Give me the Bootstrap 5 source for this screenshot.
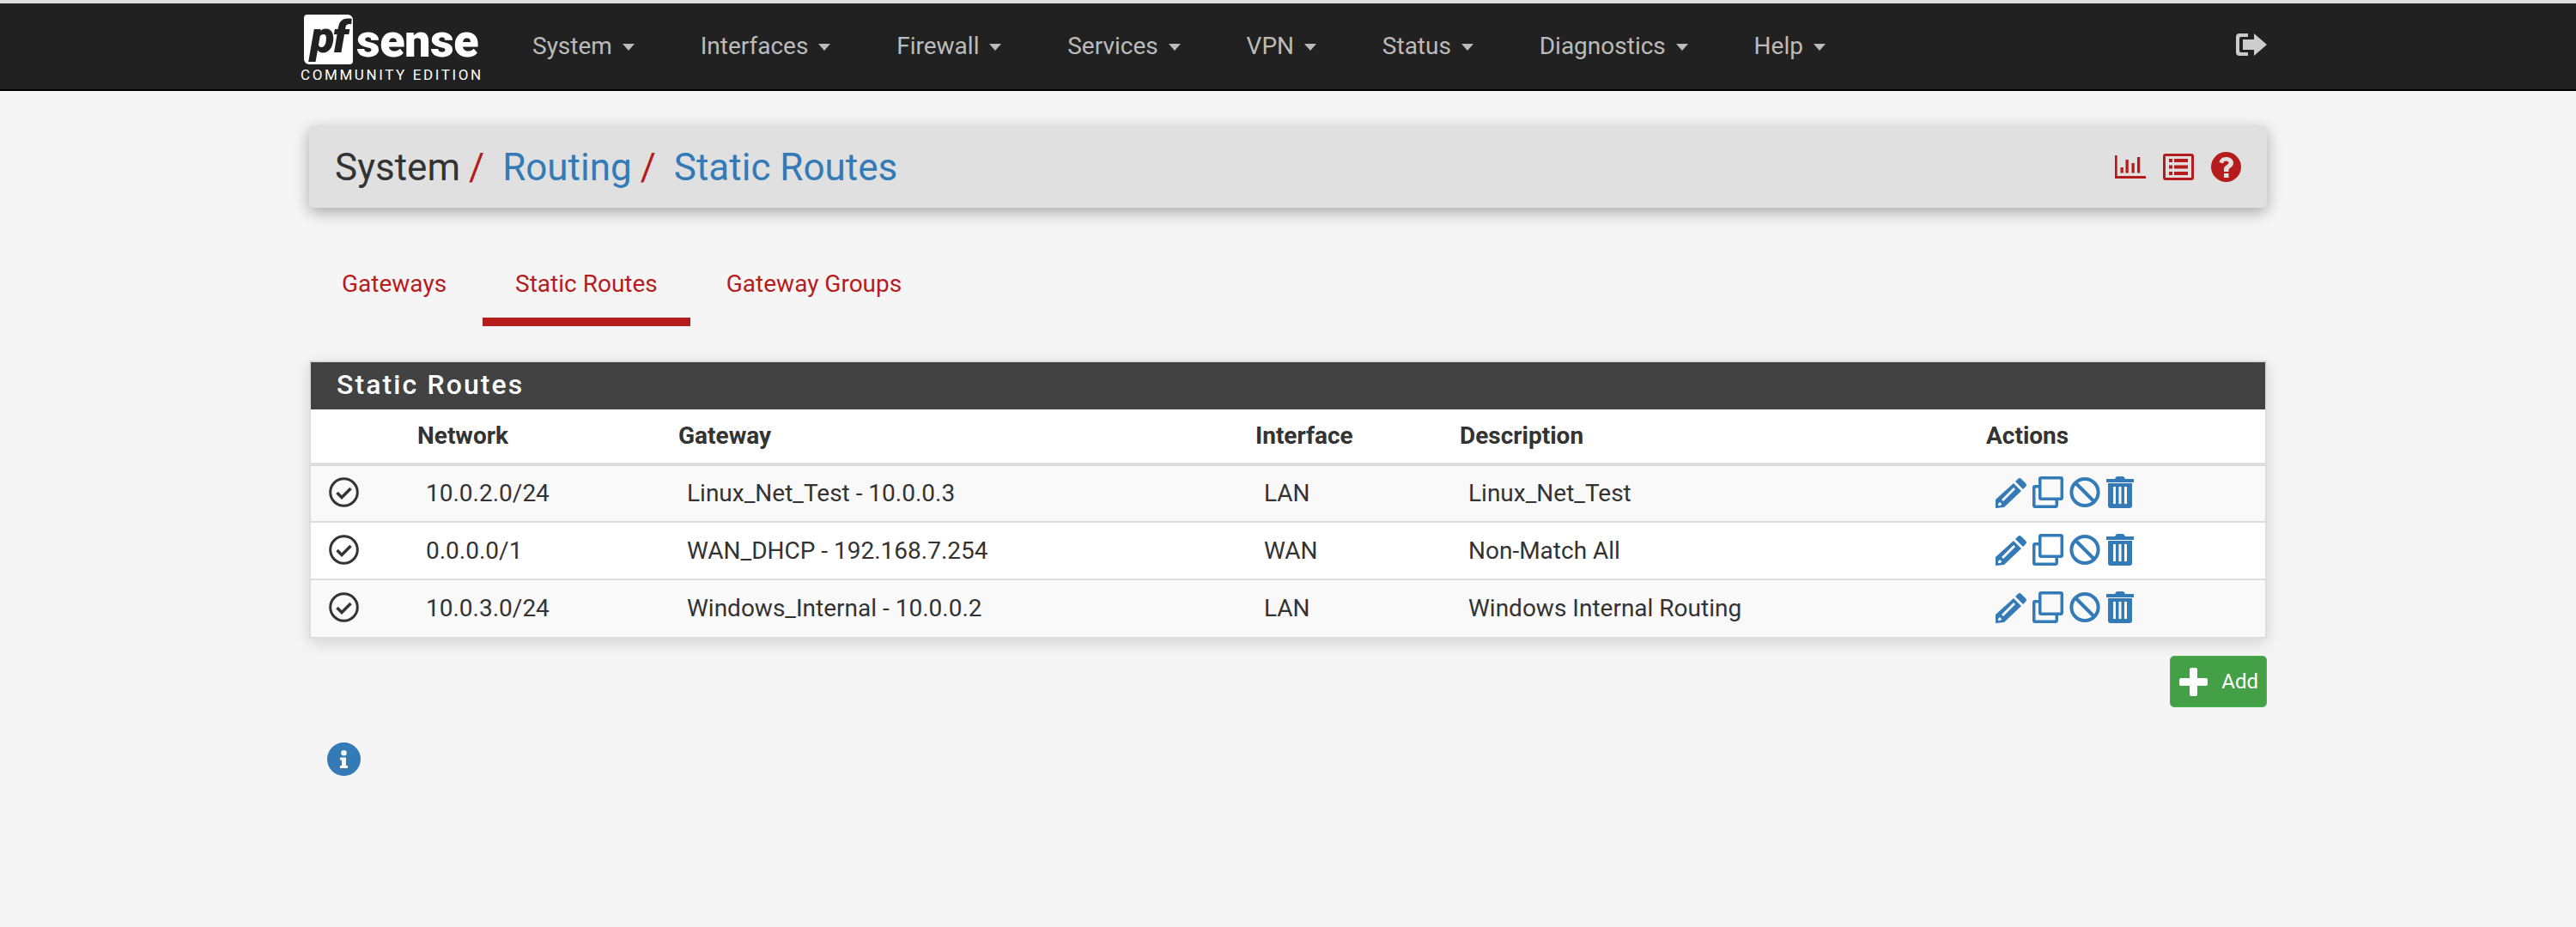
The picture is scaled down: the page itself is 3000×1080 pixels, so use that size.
<!DOCTYPE html>
<html lang="en">
<head>
<meta charset="UTF-8">
<title>pfSense - System: Routing: Static Routes</title>
<link href="https://cdn.jsdelivr.net/npm/bootstrap@5.3.2/dist/css/bootstrap.min.css" rel="stylesheet">
<style>
body { background: #f5f5f5; color: #333; font-family: Roboto, "Liberation Sans", sans-serif; font-size: 28px; border-top: 4px solid #ddd; }
.pf-top { background: #212121; border-bottom: 2px solid #000; height: 102px; padding: 0; }
.pf-topin { width: 2300px; height: 100%; margin: 0 auto; padding: 0 10px 0 0; }
.pf-brand { width: 270px; height: 100%; position: relative; }
.pf-box { position: absolute; left: 4px; top: 13px; width: 57px; height: 58px; background: #fff; border-radius: 4px 6px 4px 6px; color: #212121; font: italic 900 52px/54px Roboto, sans-serif; letter-spacing: -2px; text-align: center; }
.pf-sense { position: absolute; left: 65px; top: 19px; color: #fff; font: 900 54px/50px Roboto, sans-serif; letter-spacing: -.5px; }
.pf-edition { position: absolute; left: 0; top: 73px; color: #fff; font: 400 17px/20px Roboto, sans-serif; letter-spacing: 2.6px; white-space: nowrap; }
.pf-menu .nav-link { color: #bbb; font-size: 28px; line-height: 38px; padding: 0 76.8px 0 0; white-space: nowrap; }
.pf-menu .nav-link::after { border-top: .3em solid; border-right: .27em solid transparent; border-left: .27em solid transparent; border-bottom: 0; margin-left: 12px; vertical-align: .16em; }
.pf-logout { width: 36px; height: 26px; fill: #ccc; margin-bottom: 4px; }
.pf-page { width: 2280px; margin: 0 auto; }
.pf-crumbs { margin-top: 41px; height: 95px; background: #e0e0e0; border-radius: 5px; box-shadow: 0 5px 18px rgba(0,0,0,.32); padding: 0 30px 0 30px; font-size: 44px; }
.pf-crumbs a { color: #337ab7; text-decoration: none; }
.pf-sep { color: #b71c1c; margin: 0 21px 0 10px; }
.pf-tool { fill: #b71c1c; display: block; }
.pf-tabs { margin-top: 38px; }
.pf-tabs .nav-link { color: #b71c1c; font-size: 28px; line-height: 38px; padding: 32px 38px 20px; margin-right: 4px; border-bottom: 10px solid transparent; }
.pf-tabs .nav-link.active { border-bottom-color: #b71c1c; }
.pf-panel { margin-top: 40px; border: 2px solid #ddd; background: #fff; box-shadow: 0 5px 18px rgba(0,0,0,.14); }
.pf-head { background: #424242; color: #fff; font-size: 32px; font-weight: 500; letter-spacing: 2.1px; height: 55px; line-height: 53px; padding-left: 30px; }
.pf-table { table-layout: fixed; margin: 0; --bs-table-striped-bg: #f9f9f9; --bs-table-color: #333; --bs-table-striped-color: #333; --bs-table-border-color: #ddd; }
.pf-table th { height: 64px; padding: 0 0 0 10px; vertical-align: middle; font-weight: 700; border-bottom: 4px solid #ddd; }
.pf-table td { height: 67px; padding: 0 0 0 20px; vertical-align: middle; border-bottom: 2px solid #ddd; }
.pf-table tr:last-child td { border-bottom: 0; height: 67px; }
.pf-table td.pf-first, .pf-table td.pf-acts { padding-left: 21px; }
.pf-c1 { width: 114px; } .pf-c2 { width: 304px; } .pf-c3 { width: 672px; } .pf-c4 { width: 238px; } .pf-c5 { width: 613px; }
.pf-state { width: 35px; height: 35px; display: block; margin-bottom: 3px; }
.pf-iconrow { gap: 7px; margin-bottom: 3px; }
.pf-acts svg { fill: #337ab7; height: 37px; display: block; }
.pf-add { margin-top: 20px; width: 113px; height: 60px; background: #43a047; border: 1px solid #4caf50; border-radius: 5px; color: #fff; font-size: 24px; padding: 0 9px 0 10px; }
.pf-info { width: 39px; height: 39px; display: block; margin: 41px 0 0 21px; }
</style>
</head>
<body>

<svg width="0" height="0" class="position-absolute">
  <defs>
    <symbol id="i-pencil" viewBox="0 0 36 37">
      <path d="M26 3 Q28 1 30 3 L35 8 Q37 10 35 12 L32 15 L23 6 Z"/>
      <path fill-rule="evenodd" d="M21 8 L30 17 L10 36 L0 37 L0 27 Z M21 13 L7 27 L9 29 L23 15 Z M5 30 L3 32 L3 34 L6 34 L7 32 Z"/>
    </symbol>
    <symbol id="i-copy" viewBox="0 0 36 37">
      <path fill-rule="evenodd" d="M10 0 H33 Q36 0 36 3 V25 Q36 28 33 28 H30 V33 Q30 37 27 37 H3 Q0 37 0 34 V13 Q0 10 3 10 H7 V3 Q7 0 10 0 Z M10.500 3.500 V24.500 H32.500 V3.500 Z M3.500 13.500 V33.500 H26.500 V28 H10 Q7 28 7 25 V13.500 Z"/>
    </symbol>
    <symbol id="i-ban" viewBox="0 0 36 37">
      <circle cx="18" cy="18.500" r="15.600" fill="none" stroke="#337ab7" stroke-width="4"/>
      <path d="M7 7.500 L29 29.500" fill="none" stroke="#337ab7" stroke-width="4"/>
    </symbol>
    <symbol id="i-trash" viewBox="0 0 32 37">
      <path d="M0 3 H10 Q11 0 13 0 H19 Q21 0 22 3 H32 V7 H0 Z"/>
      <path fill-rule="evenodd" d="M2 8 H30 V34 Q30 37 27 37 H5 Q2 37 2 34 Z M8 12 V32 H11 V12 Z M14.500 12 V32 H17.500 V12 Z M21 12 V32 H24 V12 Z"/>
    </symbol>
    <symbol id="i-check" viewBox="0 0 35 35">
      <circle cx="17.500" cy="17.500" r="15.800" fill="none" stroke="#333" stroke-width="3"/>
      <path d="M9.500 18 L15 23.500 L25.500 13" fill="none" stroke="#333" stroke-width="3.500"/>
    </symbol>
  </defs>
</svg>

<nav class="navbar pf-top">
  <div class="pf-topin d-flex align-items-center">
    <a class="pf-brand d-block text-decoration-none flex-shrink-0">
      <span class="pf-box">pf</span>
      <span class="pf-sense">sense</span>
      <span class="pf-edition">COMMUNITY EDITION</span>
    </a>
    <ul class="nav pf-menu">
      <li class="nav-item"><a class="nav-link dropdown-toggle" href="#">System</a></li>
      <li class="nav-item"><a class="nav-link dropdown-toggle" href="#">Interfaces</a></li>
      <li class="nav-item"><a class="nav-link dropdown-toggle" href="#">Firewall</a></li>
      <li class="nav-item"><a class="nav-link dropdown-toggle" href="#">Services</a></li>
      <li class="nav-item"><a class="nav-link dropdown-toggle" href="#">VPN</a></li>
      <li class="nav-item"><a class="nav-link dropdown-toggle" href="#">Status</a></li>
      <li class="nav-item"><a class="nav-link dropdown-toggle" href="#">Diagnostics</a></li>
      <li class="nav-item"><a class="nav-link dropdown-toggle" href="#">Help</a></li>
    </ul>
    <svg class="pf-logout ms-auto" viewBox="0 0 36 26">
      <path d="M4 0 H14 V4 H6 Q4 4 4 6 V20 Q4 22 6 22 H14 V26 H4 Q0 26 0 22 V4 Q0 0 4 0 Z"/>
      <path d="M8 7 H21 V0 L36 13 L21 26 V19 H8 Z"/>
    </svg>
  </div>
</nav>

<div class="pf-page">
  <div class="pf-crumbs d-flex align-items-center justify-content-between">
    <div><span>System</span><span class="pf-sep">/</span><a href="#">Routing</a><span class="pf-sep">/</span><a href="#">Static Routes</a></div>
    <div class="d-flex align-items-center">
      <svg class="pf-tool me-3" width="36" height="27" viewBox="0 0 36 27"><path d="M0 0 H2.700 V24 H36 V27 H0 Z M6.500 14 H9.800 V20.500 H6.500 Z M12.500 5 H15.800 V20.500 H12.500 Z M19.500 9 H22.800 V20.500 H19.500 Z M26 2 H29.300 V20.500 H26 Z"/></svg>
      <svg class="pf-tool me-3 ms-1" width="36" height="31" viewBox="0 0 36 31"><path fill-rule="evenodd" d="M3 0 H33 Q36 0 36 3 V28 Q36 31 33 31 H3 Q0 31 0 28 V3 Q0 0 3 0 Z M3 3 V28 H33 V3 Z M7 6 H11 V10 H7 Z M13 6 H29 V10 H13 Z M7 13.500 H11 V17.500 H7 Z M13 13.500 H29 V17.500 H13 Z M7 21 H11 V25 H7 Z M13 21 H29 V25 H13 Z"/></svg>
      <svg class="pf-tool ms-1" width="35" height="35" viewBox="0 0 35 35"><path fill-rule="evenodd" d="M17.500 0 A17.500 17.500 0 1 1 17.500 35 A17.500 17.500 0 1 1 17.500 0 Z M15 25 V30 H20.500 V25 Z M17.500 6 C12.500 6 10 9 9.500 12 L14 13.500 C14.500 11.500 15.500 10.500 17.500 10.500 C19.500 10.500 20.500 11.500 20.500 12.800 C20.500 15 15 16 15 20 V23 H20.500 V21 C20.500 19 26 18 26 12.800 C26 8.500 22 6 17.500 6 Z"/></svg>
    </div>
  </div>

  <ul class="nav pf-tabs">
    <li class="nav-item"><a class="nav-link" href="#">Gateways</a></li>
    <li class="nav-item"><a class="nav-link active" href="#">Static Routes</a></li>
    <li class="nav-item"><a class="nav-link" href="#">Gateway Groups</a></li>
  </ul>

  <div class="pf-panel">
    <div class="pf-head">Static Routes</div>
    <table class="table table-striped pf-table">
      <colgroup><col class="pf-c1"><col class="pf-c2"><col class="pf-c3"><col class="pf-c4"><col class="pf-c5"><col></colgroup>
      <thead>
        <tr><th></th><th>Network</th><th>Gateway</th><th>Interface</th><th>Description</th><th>Actions</th></tr>
      </thead>
      <tbody>
        <tr>
          <td class="pf-first"><svg class="pf-state"><use href="#i-check"/></svg></td>
          <td>10.0.2.0/24</td><td>Linux_Net_Test - 10.0.0.3</td><td>LAN</td><td>Linux_Net_Test</td>
          <td class="pf-acts"><div class="d-flex pf-iconrow"><svg width="36"><use href="#i-pencil"/></svg><svg width="36"><use href="#i-copy"/></svg><svg width="36"><use href="#i-ban"/></svg><svg width="32"><use href="#i-trash"/></svg></div></td>
        </tr>
        <tr>
          <td class="pf-first"><svg class="pf-state"><use href="#i-check"/></svg></td>
          <td>0.0.0.0/1</td><td>WAN_DHCP - 192.168.7.254</td><td>WAN</td><td>Non-Match All</td>
          <td class="pf-acts"><div class="d-flex pf-iconrow"><svg width="36"><use href="#i-pencil"/></svg><svg width="36"><use href="#i-copy"/></svg><svg width="36"><use href="#i-ban"/></svg><svg width="32"><use href="#i-trash"/></svg></div></td>
        </tr>
        <tr>
          <td class="pf-first"><svg class="pf-state"><use href="#i-check"/></svg></td>
          <td>10.0.3.0/24</td><td>Windows_Internal - 10.0.0.2</td><td>LAN</td><td>Windows Internal Routing</td>
          <td class="pf-acts"><div class="d-flex pf-iconrow"><svg width="36"><use href="#i-pencil"/></svg><svg width="36"><use href="#i-copy"/></svg><svg width="36"><use href="#i-ban"/></svg><svg width="32"><use href="#i-trash"/></svg></div></td>
        </tr>
      </tbody>
    </table>
  </div>

  <div class="d-flex justify-content-end">
    <button class="btn pf-add d-flex align-items-center justify-content-between">
      <svg width="33" height="33" viewBox="0 0 33 33" fill="#fff"><path d="M14 0 H19 Q21 0 21 2 V12 H31 Q33 12 33 14 V19 Q33 21 31 21 H21 V31 Q21 33 19 33 H14 Q12 33 12 31 V21 H2 Q0 21 0 19 V14 Q0 12 2 12 H12 V2 Q12 0 14 0 Z"/></svg>
      <span>Add</span>
    </button>
  </div>

  <svg class="pf-info" viewBox="0 0 39 39"><path fill="#337ab7" fill-rule="evenodd" d="M19.500 0 A19.500 19.500 0 1 1 19.500 39 A19.500 19.500 0 1 1 19.500 0 Z M19.500 9 A3.300 3.300 0 1 0 19.500 15.600 A3.300 3.300 0 1 0 19.500 9 Z M15 17.500 V20.500 H17 V27 H15 V30 H24 V27 H22 V17.500 Z"/></svg>
</div>

<script src="https://cdn.jsdelivr.net/npm/bootstrap@5.3.2/dist/js/bootstrap.bundle.min.js"></script>
</body>
</html>
